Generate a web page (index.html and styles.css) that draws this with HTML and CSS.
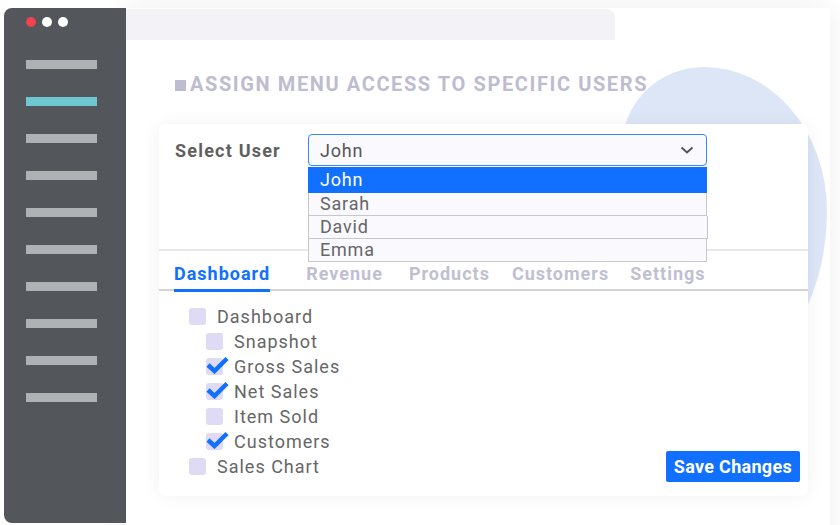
FILE: index.html
```html
<!DOCTYPE html>
<html lang="en">
<head>
    <meta charset="UTF-8">
    <meta name="viewport" content="width=device-width, initial-scale=1.0">
    <title>Menu Access</title>
    <link rel="stylesheet" href="styles.css">
</head>
<body>
    <div class="screen">
        <div class="sidebar">
            <div class="dots">
                <span class="dot red"></span>
                <span class="dot"></span>
                <span class="dot"></span>
            </div>
            <div class="side-links">
                <span class="side-bar"></span>
                <span class="side-bar active"></span>
                <span class="side-bar"></span>
                <span class="side-bar"></span>
                <span class="side-bar"></span>
                <span class="side-bar"></span>
                <span class="side-bar"></span>
                <span class="side-bar"></span>
                <span class="side-bar"></span>
                <span class="side-bar"></span>
            </div>
        </div>

        <div class="main">
            <div class="top-bar"></div>
            <div class="blob"></div>
            <h1 class="page-title"><span class="title-mark"></span>Assign menu access to specific users</h1>

            <div class="card">
                <div class="user-row">
                    <label class="user-label">Select User</label>
                    <div class="select-wrap">
                        <div class="select-box">
                            <span>John</span>
                            <svg class="chevron" width="14" height="8" viewBox="0 0 14 8">
                                <polyline points="1.5,1.5 7,6.5 12.5,1.5" fill="none" stroke="#555" stroke-width="2"/>
                            </svg>
                        </div>
                        <ul class="options">
                            <li class="option selected">John</li>
                            <li class="option">Sarah</li>
                            <li class="option wide">David</li>
                            <li class="option">Emma</li>
                        </ul>
                    </div>
                </div>

                <div class="tabs">
                    <span class="tab active">Dashboard</span>
                    <span class="tab revenue">Revenue</span>
                    <span class="tab products">Products</span>
                    <span class="tab customers">Customers</span>
                    <span class="tab">Settings</span>
                </div>

                <div class="tab-body">
                    <ul class="tree">
                        <li class="item"><span class="box"></span>Dashboard</li>
                        <li class="item sub"><span class="box"></span>Snapshot</li>
                        <li class="item sub"><span class="box checked"><svg viewBox="0 0 24 18" width="24" height="18"><polyline points="2,9 8.5,15 21,2.5" fill="none" stroke="#1170ff" stroke-width="4.5"/></svg></span>Gross Sales</li>
                        <li class="item sub"><span class="box checked"><svg viewBox="0 0 24 18" width="24" height="18"><polyline points="2,9 8.5,15 21,2.5" fill="none" stroke="#1170ff" stroke-width="4.5"/></svg></span>Net Sales</li>
                        <li class="item sub"><span class="box"></span>Item Sold</li>
                        <li class="item sub"><span class="box checked"><svg viewBox="0 0 24 18" width="24" height="18"><polyline points="2,9 8.5,15 21,2.5" fill="none" stroke="#1170ff" stroke-width="4.5"/></svg></span>Customers</li>
                        <li class="item"><span class="box"></span>Sales Chart</li>
                    </ul>
                    <button class="save-button">Save Changes</button>
                </div>
            </div>
        </div>
    </div>
</body>
</html>
```

FILE: styles.css
```css
body {
    margin: 0;
    padding: 0;
    background-color: #fff;
    font-family: Roboto, "Liberation Sans", Arial, sans-serif;
}
.screen {
    width: 840px;
    height: 525px;
    overflow: hidden;
    display: flex;
    padding: 8px 0 0 4px;
    box-sizing: border-box;
}

/* left navigation */
.sidebar {
    width: 122px;
    height: 515px;
    flex-shrink: 0;
    background-color: #53575b;
    border-radius: 8px 0 0 8px;
    padding: 9px 0 0 22px;
    box-sizing: border-box;
    position: relative;
    z-index: 2;
}
.dots {
    display: flex;
    gap: 6px;
}
.dot {
    width: 10px;
    height: 10px;
    border-radius: 50%;
    background-color: #fff;
}
.dot.red {
    background-color: #f2414f;
}
.side-links {
    display: flex;
    flex-direction: column;
    gap: 28px;
    margin-top: 33px;
}
.side-bar {
    display: block;
    width: 71px;
    height: 9px;
    background-color: #aeb2b5;
}
.side-bar.active {
    background-color: #6fc7d1;
}

/* content panel */
.main {
    width: 704px;
    height: 540px;
    position: relative;
    background-color: #fff;
    box-shadow: 0 0 30px rgba(0, 0, 0, 0.07);
}
.top-bar {
    width: 489px;
    height: 31px;
    margin-top: 1px;
    background-color: #f3f3f7;
    border-top-right-radius: 8px;
}
.blob {
    position: absolute;
    left: 496px;
    top: 59px;
    width: 205px;
    height: 320px;
    border-radius: 40% 60% 60% 40% / 25% 45% 55% 75%;
    background-color: #dde6f7;
}
.page-title {
    position: relative;
    margin: 31px 0 0 49px;
    font-size: 20px;
    line-height: 26px;
    font-weight: bold;
    text-transform: uppercase;
    letter-spacing: 1.6px;
    color: #bdbcd0;
}
.title-mark {
    display: inline-block;
    width: 11px;
    height: 11px;
    margin-right: 4px;
    background-color: #bdbcd0;
}

.card {
    position: relative;
    width: 649px;
    height: 372px;
    margin: 27px 0 0 33px;
    background-color: #fff;
    border-radius: 6px;
    box-shadow: 0 0 18px rgba(0, 0, 0, 0.06);
}
.user-row {
    display: flex;
    height: 127px;
    padding: 10px 0 0 16px;
    box-sizing: border-box;
    border-bottom: 2px solid #e8e8ea;
}
.user-label {
    width: 133px;
    padding-top: 6px;
    font-size: 18px;
    font-weight: bold;
    letter-spacing: 1.2px;
    color: #5f5f5f;
}
.select-wrap {
    position: relative;
    width: 399px;
}
.select-box {
    height: 30px;
    border: 1px solid #3b86f7;
    border-radius: 4px;
    background-color: #f9f9fe;
    display: flex;
    align-items: center;
    justify-content: space-between;
    padding: 0 12px 0 11px;
    font-size: 18px;
    letter-spacing: 0.8px;
    color: #555;
}
.chevron {
    display: block;
}
.options {
    position: absolute;
    top: 33px;
    left: 0;
    width: 399px;
    margin: 0;
    padding: 0;
    list-style: none;
    z-index: 3;
}
.option {
    height: 22px;
    line-height: 22px;
    padding-left: 11px;
    font-size: 18px;
    letter-spacing: 0.8px;
    color: #666;
    background-color: #f9f9fe;
    border: 1px solid #c8c8cc;
    border-top: none;
    box-sizing: content-box;
}
.option.selected {
    height: 25px;
    line-height: 26px;
    color: #fff;
    background-color: #1170ff;
    border-color: #1170ff;
}
.option.wide {
    margin-right: -1px;
}

.tabs {
    display: flex;
    height: 38px;
    padding: 0 0 0 15px;
    border-bottom: 2px solid #d4d4d8;
}
.tab {
    margin-top: 12px;
    margin-right: 21px;
    font-size: 18px;
    font-weight: bold;
    letter-spacing: 1px;
    color: #c0bfd2;
}
.tab.active {
    height: 26px;
    margin-right: 36px;
    color: #1170ff;
    border-bottom: 3px solid #1170ff;
}
.tab.revenue {
    margin-right: 26px;
}
.tab.products {
    margin-right: 22px;
}

.tab-body {
    display: flex;
    justify-content: space-between;
    align-items: flex-end;
    padding: 13px 8px 0 30px;
}
.tree {
    margin: 0;
    padding: 0;
    list-style: none;
}
.item {
    display: flex;
    align-items: center;
    height: 25px;
    font-size: 18px;
    letter-spacing: 1px;
    color: #666;
}
.item.sub {
    padding-left: 17px;
}
.box {
    position: relative;
    width: 17px;
    height: 17px;
    margin-right: 11px;
    border-radius: 3px;
    background-color: #dfdbf5;
    flex-shrink: 0;
}
.box svg {
    position: absolute;
    left: 0;
    top: -2px;
}
.save-button {
    margin-bottom: -3px;
    height: 31px;
    padding: 0 8px;
    border: none;
    border-radius: 2px;
    background-color: #1170ff;
    color: #fff;
    font-family: Roboto, "Liberation Sans", Arial, sans-serif;
    font-size: 18px;
    font-weight: bold;
    letter-spacing: 0.3px;
}
```
